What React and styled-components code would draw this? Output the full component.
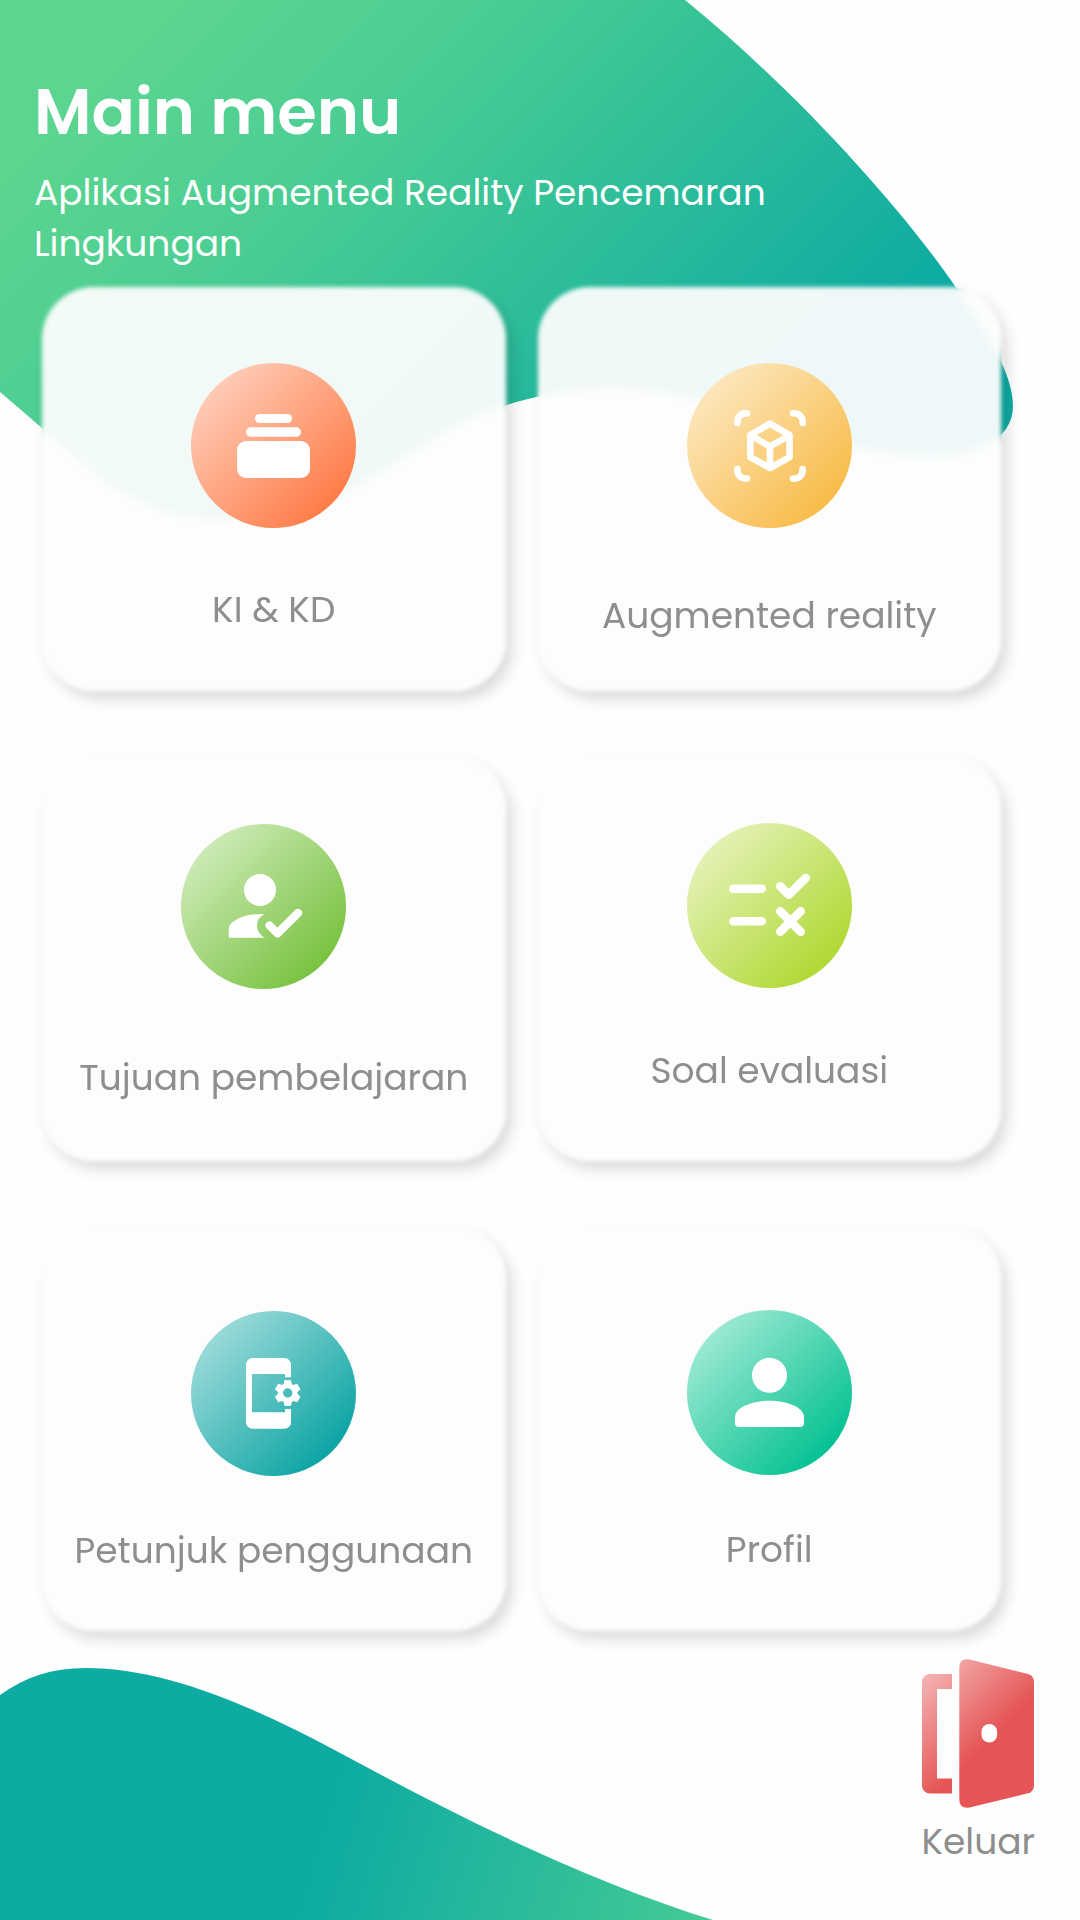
import React from "react";
import styled, { createGlobalStyle } from "styled-components";

const GlobalStyle = createGlobalStyle`
  *, *::before { box-sizing: border-box; }
  body {
    margin: 0;
    background: #fefefe;
    font-family: Poppins, Inter, "Open Sans", sans-serif;
  }
`;

const Page = styled.div`
  display: grid;
  min-height: 100vh;
  overflow: hidden;
`;

const Backdrop = styled.div`
  grid-area: 1 / 1;
  display: flex;
  flex-direction: column;
  justify-content: space-between;
  svg { display: block; width: 100%; height: auto; }
`;

const Content = styled.div`
  grid-area: 1 / 1;
  display: flex;
  flex-direction: column;
`;

const Header = styled.header`
  padding: 72px 200px 24px 34px;
  color: #fff;
`;

const Title = styled.h1`
  margin: 0;
  font-size: 64px;
  font-weight: 600;
  line-height: 80px;
`;

const Subtitle = styled.p`
  margin: 15px 0 0;
  font-size: 36px;
  line-height: 51px;
`;

const Menu = styled.nav`
  display: grid;
  grid-template-columns: 1fr 1fr;
  grid-auto-rows: 404px;
  gap: 66px 32px;
  padding: 0 79px 0 42px;
  margin-top: -6px;
`;

const Card = styled.button`
  display: grid;
  padding: 0;
  border: 0;
  border-radius: 52px;
  background: none;
  backdrop-filter: blur(5px);
  color: #8e8e8e;
  font: inherit;
  font-size: 36px;
  line-height: 44px;
  cursor: pointer;

  &::before {
    content: "";
    grid-area: 1 / 1;
    border-radius: 52px;
    background: rgba(253, 253, 253, 0.94);
    box-shadow: 6px 8px 14px rgba(0, 0, 0, 0.15);
    filter: blur(2px);
  }
`;

const CardBody = styled.span`
  grid-area: 1 / 1;
  z-index: 1;
  display: flex;
  flex-direction: column;
  align-items: center;
  gap: ${(p) => p.$gap}px;
  padding-top: ${(p) => p.$top}px;
`;

const Badge = styled.span`
  width: 165px;
  height: 165px;
  margin-right: ${(p) => p.$inset || 0}px;
  border-radius: 50%;
  background: linear-gradient(135deg, ${(p) => p.$from} 8%, ${(p) => p.$to} 88%);
  svg { display: block; }
`;

const Footer = styled.footer`
  display: flex;
  justify-content: flex-end;
  padding: 28px 45px 39px;
`;

const ExitButton = styled.button`
  display: flex;
  flex-direction: column;
  align-items: center;
  gap: 12px;
  padding: 0;
  border: 0;
  background: none;
  color: #8e8e8e;
  font: inherit;
  font-size: 36px;
  line-height: 44px;
  cursor: pointer;
`;

const Icon = ({ children }) => (
  <svg width="165" height="165" viewBox="0 0 165 165" fill="#fff" aria-hidden="true">
    {children}
  </svg>
);

const StackIcon = () => (
  <Icon>
    <rect x="64" y="51" width="37" height="9" rx="4.5" />
    <rect x="55" y="64.3" width="55" height="9.4" rx="4.7" />
    <rect x="46" y="78" width="73" height="37" rx="9" />
  </Icon>
);

const CubeScanIcon = () => (
  <Icon>
    <g fill="none" stroke="#fff" strokeWidth="6.6" strokeLinecap="round" strokeLinejoin="round">
      <path d="M50.4 60V58.4a8 8 0 0 1 8-8H60M106 50.4h1.6a8 8 0 0 1 8 8V60M50.4 106v1.6a8 8 0 0 0 8 8H60M106 115.6h1.6a8 8 0 0 0 8-8V106" />
      <path d="M83 60.7 102.5 72V94.2L83 105 63.3 94.2V72Z" />
      <path d="M64 72.5 83 83.5 102 72.5M83 83.5V104" />
    </g>
  </Icon>
);

const PersonCheckIcon = () => (
  <Icon>
    <circle cx="79" cy="66" r="16" />
    <path d="M48.7 113.7a1 1 0 0 1-1-1V105.5C47.7 103 48.5 101 50 99.5C58 92 70 89.5 83.3 90.1C79.5 92.5 76 96 76 101.5C76 107 79.5 111 83.5 113.7Z" />
    <path d="M88.6 101.5 96.4 109.5 117 89" fill="none" stroke="#fff" strokeWidth="8.2" strokeLinecap="round" strokeLinejoin="round" />
  </Icon>
);

const RulesIcon = () => (
  <Icon>
    <g fill="none" stroke="#fff" strokeWidth="8.6" strokeLinecap="round" strokeLinejoin="round">
      <path d="M46.3 65.7H74.7M46.3 98.3H74.7" />
      <path d="M93.2 63.3 101.7 71.8 118.7 55" />
      <path d="M93.3 88.3 113.7 108.7M113.7 88.3 93.3 108.7" />
    </g>
  </Icon>
);

const PhoneSettingsIcon = () => (
  <Icon>
    <path d="M61.5 47H93.5a6.5 6.5 0 0 1 6.5 6.5V66.3H94V63H61V101.3H94V98H100V111.2a6.5 6.5 0 0 1-6.5 6.5H61.5a6.5 6.5 0 0 1-6.5-6.5V53.5A6.5 6.5 0 0 1 61.5 47Z" />
    <g fill="none" stroke="#fff" transform="translate(96.7 82)">
      <circle r="7.3" strokeWidth="5.2" />
      {[0, 60, 120, 180, 240, 300].map((a) => (
        <path key={a} d="M-4-7 -3-12.5H3L4-7Z" fill="#fff" strokeWidth="0.8" strokeLinejoin="round" transform={`rotate(${a})`} />
      ))}
    </g>
  </Icon>
);

const PersonIcon = () => (
  <Icon>
    <circle cx="82.5" cy="65.3" r="17.5" />
    <path d="M48 107C48 97 66 90.7 82.5 90.7S117 97 117 107V113a4 4 0 0 1-4 4H52a4 4 0 0 1-4-4Z" />
  </Icon>
);

const DoorIcon = () => (
  <svg width="112" height="149" viewBox="0 0 112 149" aria-hidden="true">
    <defs>
      <linearGradient id="door" gradientUnits="userSpaceOnUse" x1="0" y1="12" x2="68" y2="80">
        <stop offset="0" stopColor="#f5b8b8" />
        <stop offset="1" stopColor="#e55555" />
      </linearGradient>
    </defs>
    <path fill="url(#door)" d="M30 15V30H15V119.5H30V134.5H8a8 8 0 0 1-8-8V23a8 8 0 0 1 8-8Z" />
    <path fill="url(#door)" d="M46.5.3 106 15Q112 17 112 23V126.5Q112 132.5 106 134.3L46.5 148.8Q37.3 149.5 37.3 140.5V8.5Q37.3-.5 46.5.3Z" />
    <rect x="59.5" y="65" width="15.6" height="18.6" rx="7.8" fill="#fefefe" />
  </svg>
);

const items = [
  { label: "KI & KD", icon: StackIcon, from: "#ffd2c0", to: "#ff7a45", top: 76, gap: 60 },
  { label: "Augmented reality", icon: CubeScanIcon, from: "#fdeac6", to: "#f8ba45", top: 76, gap: 66 },
  { label: "Tujuan pembelajaran", icon: PersonCheckIcon, from: "#d3edbf", to: "#76c13c", top: 67, gap: 67, inset: 20 },
  { label: "Soal evaluasi", icon: RulesIcon, from: "#e8f4c0", to: "#add82f", top: 66, gap: 61 },
  { label: "Petunjuk penggunaan", icon: PhoneSettingsIcon, from: "#a6dfdd", to: "#07a2a2", top: 84, gap: 53 },
  { label: "Profil", icon: PersonIcon, from: "#a8ecd8", to: "#00c090", top: 83, gap: 53 },
];

export default function App() {
  return (
    <>
      <GlobalStyle />
      <Page>
        <Backdrop aria-hidden="true">
          <svg viewBox="0 0 1080 530">
            <defs>
              <linearGradient id="top" gradientUnits="userSpaceOnUse" x1="95" y1="95" x2="610" y2="610">
                <stop offset="0" stopColor="#5bd590" />
                <stop offset="0.3" stopColor="#4acd93" />
                <stop offset="1" stopColor="#0daba2" />
              </linearGradient>
            </defs>
            <path fill="url(#top)" d="M0 0H685C790 85 900 205 957 289C990 338 1013 375 1013 406C1013 440 975 456 937 456C800 456 740 389 613 389C420 389 390 520 227 520C130 520 90 466 43 429Q20 409 0 392Z" />
          </svg>
          <svg viewBox="0 1660 1080 260">
            <defs>
              <linearGradient id="bottom" gradientUnits="userSpaceOnUse" x1="330" y1="1820" x2="856" y2="1978">
                <stop offset="0" stopColor="#0daba2" />
                <stop offset="1" stopColor="#5cd68f" />
              </linearGradient>
            </defs>
            <path fill="url(#bottom)" d="M0 1695C25 1677 52 1668 85 1668C180 1668 280 1720 372 1770C480 1828 600 1885 713 1920H0Z" />
          </svg>
        </Backdrop>
        <Content>
          <Header>
            <Title>Main menu</Title>
            <Subtitle>Aplikasi Augmented Reality Pencemaran Lingkungan</Subtitle>
          </Header>
          <Menu>
            {items.map(({ label, icon: Glyph, from, to, top, gap, inset }) => (
              <Card key={label} type="button">
                <CardBody $top={top} $gap={gap}>
                  <Badge $from={from} $to={to} $inset={inset}>
                    <Glyph />
                  </Badge>
                  <span>{label}</span>
                </CardBody>
              </Card>
            ))}
          </Menu>
          <Footer>
            <ExitButton type="button">
              <DoorIcon />
              <span>Keluar</span>
            </ExitButton>
          </Footer>
        </Content>
      </Page>
    </>
  );
}
